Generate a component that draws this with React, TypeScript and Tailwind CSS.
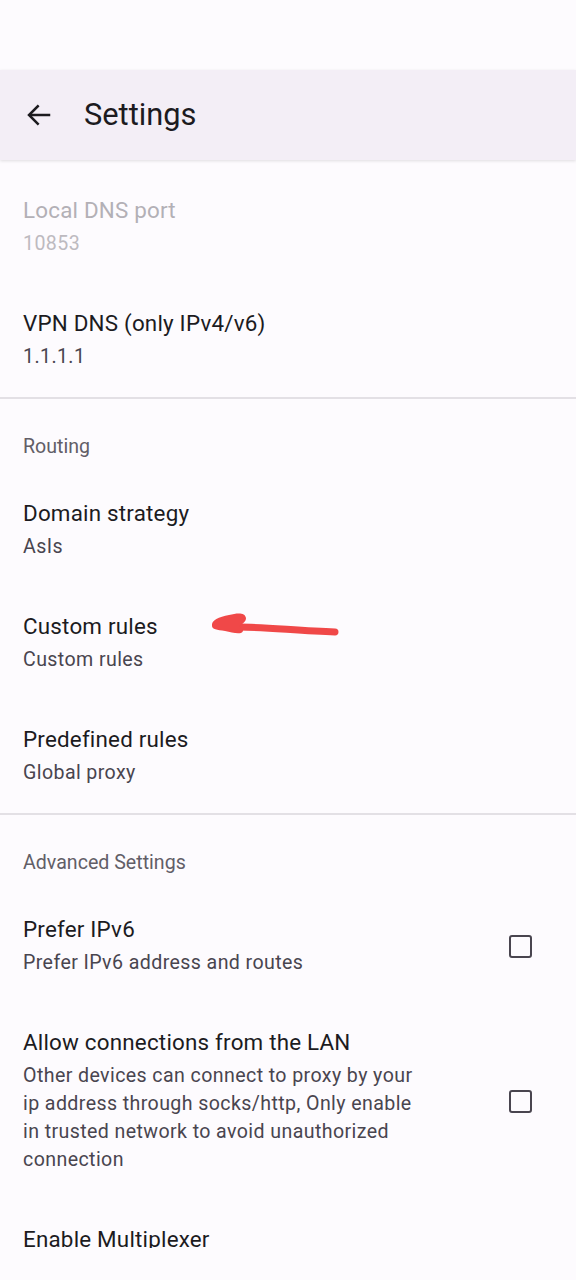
import React from "react";

const font = { fontFamily: "Roboto, 'Noto Sans', sans-serif" };

function Item({ title, sub, disabled, checkbox, lines }: { title: string; sub?: string; disabled?: boolean; checkbox?: boolean; lines?: string[] }) {
  return (
    <div className="flex items-center pl-[23px] pr-[44px] pt-[25px] pb-[26px] min-h-[113px]">
      <div className="flex-1 flex flex-col self-start">
        <div className={`text-[22.4px] leading-[28px] tracking-[0.2px] ${disabled ? "text-[#b3b0b6]" : "text-[#1c1b1f]"}`}>{title}</div>
        {sub && <div className={`mt-[6px] text-[19.6px] leading-[28px] tracking-[0.4px] ${disabled ? "text-[#bdbac0]" : "text-[#49454f]"}`}>{sub}</div>}
        {lines && (
          <div className="mt-[6px] text-[19.6px] leading-[28px] tracking-[0.4px] text-[#49454f]">
            {lines.map((l) => (
              <div key={l}>{l}</div>
            ))}
          </div>
        )}
      </div>
      {checkbox && <div className="w-[23px] h-[23px] border-[2.5px] border-[#49454f] rounded-[3px] ml-4 shrink-0" />}
    </div>
  );
}

function Category({ label }: { label: string }) {
  return (
    <div className="pl-[23px] pt-[37px] pb-[16px] text-[19.6px] leading-[22px] text-[#625e67]">{label}</div>
  );
}

export default function App() {
  return (
    <div className="w-[576px] h-[1280px] bg-[#fdfbfe] flex flex-col overflow-hidden" style={font}>
      <div className="h-[70px] bg-[#fdfbfe] shrink-0" />
      <div className="h-[90px] bg-[#f3eef6] shrink-0 flex items-center shadow-[0_1px_3px_rgba(0,0,0,0.12)] relative z-10">
        <svg width="30" height="30" viewBox="0 0 24 24" className="ml-[24px]" fill="none" stroke="#1c1b1f" strokeWidth="2" strokeLinecap="square">
          <path d="M20 12H5" />
          <path d="M11 5l-7 7 7 7" strokeLinejoin="miter" />
        </svg>
        <div className="ml-[30px] text-[30.8px] leading-[36px] text-[#1c1b1f]">Settings</div>
      </div>
      <div className="h-[1088px] overflow-hidden shrink-0 relative">
        <div className="pt-[11px]">
          <Item title="Local DNS port" sub="10853" disabled />
          <Item title="VPN DNS (only IPv4/v6)" sub="1.1.1.1" />
          <div className="h-[2px] bg-[#e3e0e5]" />
          <Category label="Routing" />
          <Item title="Domain strategy" sub="AsIs" />
          <div className="relative">
            <Item title="Custom rules" sub="Custom rules" />
            <svg className="absolute left-[205px] top-[17px]" width="140" height="40" viewBox="0 0 140 40" fill="none">
              <path d="M34 23 C60 23, 95 27, 130 28" stroke="#f04848" strokeWidth="7" strokeLinecap="round" />
              <path d="M7 22 C6 16, 14 13, 24 11 C32 9, 40 8, 41 14 C41 18, 37 20, 34 22 C38 24, 40 27, 36 29 C31 30, 26 28, 20 27 C12 26, 7 25, 7 22 Z" fill="#f04848" />
            </svg>
          </div>
          <Item title="Predefined rules" sub="Global proxy" />
          <div className="h-[2px] bg-[#e3e0e5]" />
          <Category label="Advanced Settings" />
          <Item title="Prefer IPv6" sub="Prefer IPv6 address and routes" checkbox />
          <Item
            title="Allow connections from the LAN"
            lines={[
              "Other devices can connect to proxy by your",
              "ip address through socks/http, Only enable",
              "in trusted network to avoid unauthorized",
              "connection",
            ]}
            checkbox
          />
          <Item title="Enable Multiplexer" />
        </div>
      </div>
      <div className="flex-1 bg-[#fdfbfe]" />
    </div>
  );
}
